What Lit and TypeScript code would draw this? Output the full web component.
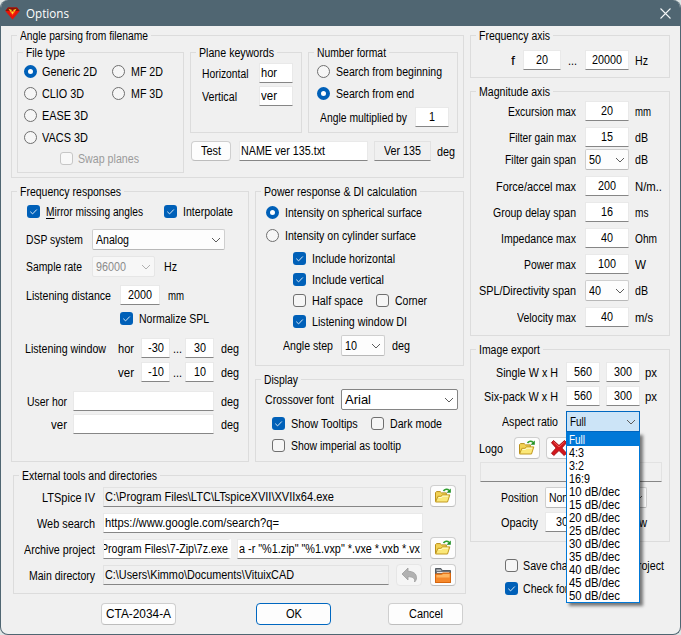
import { LitElement, html, css, nothing } from "lit";
import { customElement, property } from "lit/decorators.js";
import { classMap } from "lit/directives/class-map.js";

const pen = document.createElement("canvas").getContext("2d")!;

/** A single line of text condensed to a fixed advance width. */
@customElement("fit-text")
class FitText extends LitElement {
  @property() text = "";
  @property({ type: Number }) w = 0;
  @property({ type: Number }) size = 12;
  @property() face = "Liberation Sans";
  @property({ type: Number }) mark = 0;

  static styles = css`
    :host { display: block; height: 14px; flex: none; }
    .line { display: block; width: max-content; white-space: pre; transform-origin: 0 50%; }
    .mark { text-decoration: underline; text-underline-offset: 2px; }
  `;

  render() {
    pen.font = `${this.size}px "${this.face}"`;
    const k = this.w / pen.measureText(this.text).width;
    this.style.width = `${this.w}px`;
    return html`<span class="line"
      style="font: ${this.size}px/14px '${this.face}', sans-serif; transform: scaleX(${k})"
      ><span class="mark">${this.text.slice(0, this.mark)}</span>${this.text.slice(this.mark)}</span>`;
  }
}

const t = (text: string, w: number, cls = "", size = 12, mark = 0) =>
  html`<fit-text class="t ${cls}" .text=${text} .w=${w} .size=${size} .mark=${mark}></fit-text>`;

const field = (text = "", w = 0, cls = "") =>
  html`<div class="field ${cls}">${text ? t(text, w) : nothing}</div>`;

const chevron = html`<svg class="chev" width="10" height="6" viewBox="0 0 10 6"><path d="M1 1l4 4 4-4" /></svg>`;

const combo = (text: string, w: number, cls = "", size = 12) =>
  html`<div class="combo ${cls}">${t(text, w, "", size)}${chevron}</div>`;

const radio = (on: boolean) => html`<i class=${classMap({ radio: true, on })}></i>`;

const check = (on: boolean, cls = "") => html`<i class="check ${on ? "on" : ""} ${cls}">
  ${on ? html`<svg width="13" height="13" viewBox="0 0 13 13"><path d="M3.3 6.7l2.3 2.2 4.2-4.4" /></svg>` : nothing}
</i>`;

const openFolder = html`<svg width="18" height="16" viewBox="0 0 18 16">
  <path d="M1.5 13.5V4.6l1-1h3.7l1.3 1.3h4.8v2.2" fill="#f3d254" stroke="#b98f1d" />
  <path d="M1.6 14l2.3-5.7h3l1.5-1.4h7.4L13.500 14z" fill="#fbe878" stroke="#c29a22" />
  <path d="M4.600 9.500h3l1.300-1.300h5" fill="none" stroke="#fffad0" />
  <path d="M9.500 3c1.200-2 4-2.300 5.500-.6" fill="none" stroke="#2f9e2f" stroke-width="1.600" />
  <path d="M16.800 0.600v4.200h-4.300z" fill="#1f8f24" />
</svg>`;

const orangeFolder = html`<svg width="18" height="17" viewBox="0 0 18 17">
  <path d="M1.500 15.500V1.500h5.500l1.300 2h8.200v12z" fill="#6e7379" stroke="#555b61" />
  <path d="M2.500 2.500h4l1 1.500h-5z" fill="#b9bec4" />
  <path d="M3 5.500h12" stroke="#e9e9e9" />
  <path d="M1.500 7h6l1-1h8v9.500h-15z" fill="#f5882b" stroke="#d8660c" />
  <path d="M2.500 8h5.500l1-1h6.500v3.500h-13z" fill="#ffb560" />
</svg>`;

const undo = html`<svg width="17" height="16" viewBox="0 0 17 16">
  <path d="M7 1v3.300c5 0 8.500 2.200 8.500 6.500 0 1.800-.8 3.200-2 4.200.8-3.500-1.500-5.300-6.500-5.300v3.300L1 7z" fill="#b1b1b1" stroke="#9d9d9d" stroke-width=".8" />
</svg>`;

const redCross = html`<svg width="18" height="18" viewBox="0 0 18 18">
  <path d="M3.500 1.500L9 6.500l5.500-5 2 2.300L11.800 9l4.700 5.200-2.300 2.300L9 11.500l-5.200 5-2.300-2.300L6.200 9 1.500 3.800z" fill="#d3161c" stroke="#a50f14" />
  <path d="M3.500 2.800L9 8l5.500-5.200" fill="none" stroke="#ee5a56" />
</svg>`;

const gem = html`<svg class="gem" width="15" height="13" viewBox="0 0 15 13">
  <path d="M3 .5h9L14.700 4 7.500 12.500.3 4z" fill="#e81408" />
  <path d="M3 .5h9L14.700 4H.3z" fill="#8c1208" />
  <path d="M3.500 1.800l3.500 1.200-1.500 2zM11.500 1.800L8 3l1.500 2z" fill="#f4d020" />
  <path d="M4.500 5h6L7.500 9z" fill="#ff2a10" /><path d="M5.800 4.500h3.400L7.500 7.500z" fill="#ffe030" />
</svg>`;

const MAGNITUDE: [string, number, string, number, string, number, boolean][] = [
  ["Excursion max", 68, "20", 12, "mm", 16, false],
  ["Filter gain max", 67, "15", 12, "dB", 13, false],
  ["Filter gain span", 71, "50", 12, "dB", 13, true],
  ["Force/accel max", 80, "200", 18, "N/m..", 27, false],
  ["Group delay span", 83, "16", 12, "ms", 13.5, false],
  ["Impedance max", 75, "40", 12, "Ohm", 22, false],
  ["Power max", 52, "100", 18, "W", 11, false],
  ["SPL/Directivity span", 97, "40", 12, "dB", 13, true],
  ["Velocity max", 59, "40", 12, "m/s", 18, false],
];

const RATIOS: [string, number][] = [
  ["Full", 16], ["4:3", 15], ["3:2", 15], ["16:9", 21],
  ...[10, 15, 20, 25, 30, 35, 40, 45, 50].map((n): [string, number] => [`${n} dB/dec`, 51]),
];

@customElement("app-root")
class AppRoot extends LitElement {
  static styles = css`
    :host { display: block; width: 681px; height: 635px; background: #dfe5e4; color: #000; }
    * { box-sizing: border-box; }
    svg { display: block; }
    .window {
      height: 635px; border: 1px solid #506672; border-top: 0; border-radius: 8px;
      background: #f0f0f0; overflow: hidden;
    }
    .title { height: 26px; background: #506672; color: #fff; display: flex; align-items: center; padding: 0 9px 0 4px; }
    .title .cap { margin-left: 6px; margin-top: 1px; }
    .close { margin-left: auto; fill: none; stroke: #f4f6f7; stroke-width: 1.1; }
    .body { display: flex; gap: 6px; padding: 2px 0 0 10px; align-items: flex-start; }
    .left { width: 453px; display: flex; flex-direction: column; gap: 6px; }
    .right { width: 200px; display: flex; flex-direction: column; gap: 6px; }
    .pair { display: flex; gap: 6px; }
    .stack { display: flex; flex-direction: column; gap: 6px; }

    fieldset { margin: 0; padding: 0; border: 1px solid #dcdcdc; min-width: 0; }
    legend { height: 15px; margin: 0 0 0 5px; padding: 1px 3px 0; }
    .g-angle { height: 150px; }
    .g-file { width: 167px; height: 128px; }
    .g-plane { width: 112px; height: 88px; }
    .g-number { width: 150px; height: 88px; }
    .g-freq { width: 238px; height: 278px; }
    .g-power { width: 209px; height: 182px; }
    .g-display { width: 209px; height: 90px; }
    .g-tools { height: 126px; margin-left: 2px; width: 453px; }
    .g-axis { height: 50px; }
    .g-mag { height: 252px; }
    .g-image { height: 200px; }

    .angle { display: flex; gap: 6px; padding: 2px 0 0 5px; }
    .angle .side { display: flex; flex-direction: column; gap: 7px; }
    .rows { display: grid; }
    .row { display: grid; height: 22px; align-items: start; justify-items: start; }
    .row > .end { justify-self: end; }
    .row > .t, .label { margin-top: 5px; }

    .file { padding-left: 6px; grid-template-rows: 22px 22px 22px 21px 22px; }
    .file .row { grid-template-columns: 18px 70px 19px 1fr; }
    .file .swap { grid-template-columns: 18px 1fr; padding-left: 36px; }
    .plane { padding: 2px 0 0 11px; grid-template-rows: 23px 22px; }
    .plane .row { grid-template-columns: 57px 34px; }
    .number { padding-left: 8px; grid-template-rows: 22px 24px 22px; }
    .number .row { grid-template-columns: 19px 1fr; }
    .number .mult { grid-template-columns: 95px 34px; padding-left: 3px; }
    .test { grid-template-columns: 48px 135px 63px 1fr; padding-left: 1px; }

    .freq { padding: 1px 0 0 14px; grid-template-rows: 28px 27px 29px 23px 30px 24px 29px 23px 22px; }
    .freq .mirror { grid-template-columns: 19px 118px 19px 1fr; padding-left: 1px; }
    .freq .dsp { grid-template-columns: 66px 133px; }
    .freq .rate { grid-template-columns: 66px 72px 1fr; }
    .freq .dist { grid-template-columns: 94px 48px 1fr; }
    .freq .norm { grid-template-columns: 19px 1fr; padding-left: 94px; }
    .freq .win { grid-template-columns: 108px 7px 32px 12px 36px 1fr; }
    .freq .user { grid-template-columns: 41px 6px 148px 1fr; }

    .power { padding: 2px 0 0 10px; grid-template-rows: 23px 23px 21px 21px 21px 24px 22px; }
    .power .row { grid-template-columns: 19px 1fr; }
    .power .sub { padding-left: 27px; }
    .power .half { grid-template-columns: 19px 64px 19px 1fr; }
    .power .step { grid-template-columns: 58px 51px 1fr; padding-left: 17px; }

    .display { padding: 1px 0 0 9px; grid-template-rows: 24px 22px 22px; }
    .display .font { grid-template-columns: 76px 117px; }
    .display .tips { grid-template-columns: 19px 80px 19px 1fr; padding-left: 7px; }

    .tools { padding: 3px 0 0 8px; grid-template-rows: 26px 26px 26px 22px; }
    .tools .row { grid-template-columns: 73px 8px 327px 26px; }
    .tools .arch { grid-template-columns: 73px 8px 134px 193px 26px; }
    .tools .main { grid-template-columns: 73px 8px 293px 34px 26px; }

    .axis { padding: 6px 0 0 40px; }
    .axis .row { grid-template-columns: 12px 45px 17px 50px 1fr; }
    .mag { padding-top: 1px; grid-template-rows: 26px 22px 27px 26px 26px 26px 26px 27px 22px; }
    .mag .row { grid-template-columns: 105px 9px 50px 1fr; }

    .image { padding: 4px 0 0 8px; grid-template-rows: 24px 25px 27px 24px 25px 25px 22px; }
    .image .size { grid-template-columns: 79px 8px 40px 39px 1fr; }
    .image .ratio { grid-template-columns: 79px 8px 74px; }
    .image .logo { grid-template-columns: 35px 32px 1fr; }
    .image .pos { grid-template-columns: 59px 7px 1fr; }
    .image .opac { grid-template-columns: 59px 7px 92px 10px; }
    .image .path { padding-left: 1px; }

    .saves { padding: 6px 0 0 35px; grid-template-rows: 23px 22px; }
    .saves .row { grid-template-columns: 18px 1fr; }

    .field {
      height: 20px; margin-top: 1px; background: #fff; border: 1px solid #e9e9e9; border-bottom-color: #868686;
      display: flex; justify-content: center; padding-top: 2px; overflow: hidden;
    }
    .field.l { justify-content: flex-start; padding-left: 1px; }
    .field.r { justify-content: flex-end; border-right: 3px solid #fff; }
    .field.ro { background: #f0f0f0; border-top-color: #e2e2e2; border-left-color: #e2e2e2; border-right-color: #e2e2e2; }
    .w29 { width: 29px; } .w34 { width: 34px; } .w38 { width: 38px; } .w40 { width: 40px; }
    .w44 { width: 44px; } .w56 { width: 57px; } .w63 { width: 63px; } .w74 { width: 74px; }
    .w102 { width: 102px; } .w117 { width: 117px; } .w127 { width: 128px; } .w129 { width: 129px; }
    .w133 { width: 133px; } .w141 { width: 141px; } .w182 { width: 182px; } .w184 { width: 185px; }
    .w286 { width: 286px; } .w320 { width: 320px; }

    .combo {
      position: relative; height: 21px; margin-top: 1px; background: #fdfdfd; border: 1px solid #cfcfcf; border-bottom-color: #b8b8b8;
      border-radius: 2px; display: flex; align-items: flex-start; justify-content: space-between; padding: 3px 3px 0 3px;
    }
    .combo.off { background: #f7f7f7; border-color: #e6e6e6; color: #8b8b8b; }
    .combo.dark { border-color: #858585; background: #fff; }
    .combo.open { background: #cce4f7; border-color: #0067c0; border-radius: 0; }
    .chev { margin-top: 4px; fill: none; stroke: #5c5c5c; }
    .off .chev { stroke: #b0b0b0; }

    .radio, .check { display: block; width: 13px; height: 13px; margin-top: 5px; border: 1px solid #6f6f6f; background: #f6f6f6; }
    .radio { border-radius: 50%; }
    .radio.on { border: 4px solid #0060b8; background: #fff; }
    .check { border-radius: 3px; }
    .check.on { border: 0; background: #0060b8; }
    .check.on path { fill: none; stroke: #d8e8f6; }
    .check.off { border-color: #c6c6c6; background: #f8f8f8; }
    .gray { color: #9b9b9b; }

    .btn {
      height: 22px; background: #fdfdfd; border: 1px solid #cfcfcf; border-bottom-color: #bdbdbd; border-radius: 4px;
      display: flex; align-items: center; justify-content: center;
    }
    .btn.icon { width: 26px; margin-top: -1px; }
    .btn.icon.low { margin-top: 0; }
    .btn.dim { background: #f5f5f5; border-color: #e6e6e6; }
    .btn.testb { width: 40px; height: 20px; margin-top: 1px; }
    .btn.main { border-color: #0067c0; }
    .actions { display: grid; grid-template-columns: 155px 132px 75px; padding: 3px 0 0 90px; }
    .actions .btn { width: 75px; }

    .menu {
      position: absolute; left: -1px; top: 20px; width: 74px; z-index: 5; padding: 0; background: #fff;
      border: 1px solid #0078d7; box-shadow: 3px 3px 3px rgba(0, 0, 0, 0.5);
    }
    .item { height: 13px; padding-left: 2px; color: #000; }
    .item.sel { background: #0078d7; color: #fff; }
  `;

  angleGroup() {
    return html`<fieldset class="g-angle">
      <legend>${t("Angle parsing from filename", 128)}</legend>
      <div class="angle">
        <fieldset class="g-file">
          <legend>${t("File type", 39)}</legend>
          <div class="rows file">
            <div class="row">${radio(true)}${t("Generic 2D", 55)}${radio(false)}${t("MF 2D", 32)}</div>
            <div class="row">${radio(false)}${t("CLIO 3D", 42)}${radio(false)}${t("MF 3D", 32)}</div>
            <div class="row">${radio(false)}${t("EASE 3D", 46)}</div>
            <div class="row">${radio(false)}${t("VACS 3D", 46)}</div>
            <div class="row swap">${check(false, "off")}${t("Swap planes", 61, "gray")}</div>
          </div>
        </fieldset>
        <div class="side">
          <div class="pair">
            <fieldset class="g-plane">
              <legend>${t("Plane keywords", 75)}</legend>
              <div class="rows plane">
                <div class="row">${t("Horizontal", 46.5)}${field("hor", 16, "l w34")}</div>
                <div class="row">${t("Vertical", 35)}${field("ver", 16, "l w34")}</div>
              </div>
            </fieldset>
            <fieldset class="g-number">
              <legend>${t("Number format", 69)}</legend>
              <div class="rows number">
                <div class="row">${radio(false)}${t("Search from beginning", 106)}</div>
                <div class="row">${radio(true)}${t("Search from end", 78)}</div>
                <div class="row mult">${t("Angle multiplied by", 87)}${field("1", 6, "w34")}</div>
              </div>
            </fieldset>
          </div>
          <div class="row test">
            <div class="btn testb">${t("Test", 20)}</div>
            ${field("NAME ver 135.txt", 84, "l w129")}${field("Ver 135", 37, "ro w56")}${t("deg", 18)}
          </div>
        </div>
      </div>
    </fieldset>`;
  }

  freqGroup() {
    return html`<fieldset class="g-freq">
      <legend>${t("Frequency responses", 101)}</legend>
      <div class="rows freq">
        <div class="row mirror">${check(true)}${t("Mirror missing angles", 97, "", 12, 1)}${check(true)}${t("Interpolate", 50)}</div>
        <div class="row dsp">${t("DSP system", 57)}${combo("Analog", 33, "w133")}</div>
        <div class="row rate">${t("Sample rate", 56)}${combo("96000", 30, "off w63")}${t("Hz", 13)}</div>
        <div class="row dist">${t("Listening distance", 85)}${field("2000", 24, "w40")}${t("mm", 16)}</div>
        <div class="row norm">${check(true)}${t("Normalize SPL", 70)}</div>
        <div class="row win">
          <div class="pair end">${t("Listening window", 81, "label")}<span></span>${t("hor", 16, "label")}</div><span></span>
          ${field("-30", 16, "w29")}${t("...", 9)}${field("30", 12, "w29")}${t("deg", 18)}
        </div>
        <div class="row win">${t("ver", 16, "end")}<span></span>
          ${field("-10", 16, "w29")}${t("...", 9)}${field("10", 12, "w29")}${t("deg", 18)}
        </div>
        <div class="row user">${t("User hor", 40, "end")}<span></span>${field("", 0, "w141")}${t("deg", 18)}</div>
        <div class="row user">${t("ver", 16, "end")}<span></span>${field("", 0, "w141")}${t("deg", 18)}</div>
      </div>
    </fieldset>`;
  }

  powerGroup() {
    return html`<fieldset class="g-power">
      <legend>${t("Power response & DI calculation", 153)}</legend>
      <div class="rows power">
        <div class="row">${radio(true)}${t("Intensity on spherical surface", 137)}</div>
        <div class="row">${radio(false)}${t("Intensity on cylinder surface", 131)}</div>
        <div class="row sub">${check(true)}${t("Include horizontal", 83)}</div>
        <div class="row sub">${check(true)}${t("Include vertical", 72)}</div>
        <div class="row sub half">${check(false)}${t("Half space", 51)}${check(false)}${t("Corner", 32)}</div>
        <div class="row sub">${check(true)}${t("Listening window DI", 95)}</div>
        <div class="row step">${t("Angle step", 50)}${combo("10", 12, "w44")}${t("deg", 18)}</div>
      </div>
    </fieldset>`;
  }

  displayGroup() {
    return html`<fieldset class="g-display">
      <legend>${t("Display", 34)}</legend>
      <div class="rows display">
        <div class="row font">${t("Crossover font", 69)}${combo("Arial", 26, "dark w117", 13)}</div>
        <div class="row tips">${check(true)}${t("Show Tooltips", 67)}${check(false)}${t("Dark mode", 52)}</div>
        <div class="row tips">${check(false)}${t("Show imperial as tooltip", 110)}</div>
      </div>
    </fieldset>`;
  }

  toolsGroup() {
    return html`<fieldset class="g-tools">
      <legend>${t("External tools and directories", 135)}</legend>
      <div class="rows tools">
        <div class="row">${t("LTSpice IV", 53, "end")}<span></span>
          ${field("C:\\Program Files\\LTC\\LTspiceXVII\\XVIIx64.exe", 229, "l ro w320")}<div class="btn icon">${openFolder}</div></div>
        <div class="row">${t("Web search", 58, "end")}<span></span>
          ${field("https://www.google.com/search?q=", 174, "l w320")}</div>
        <div class="row arch">${t("Archive project", 71, "end")}<span></span>
          ${field("Program Files\\7-Zip\\7z.exe", 127, "r w127")}
          ${field('a -r "%1.zip" "%1.vxp" *.vxe *.vxb *.vx', 181, "l w184")}<div class="btn icon">${openFolder}</div></div>
        <div class="row main">${t("Main directory", 66, "end")}<span></span>
          ${field("C:\\Users\\Kimmo\\Documents\\VituixCAD", 189, "l ro w286")}
          <div class="btn icon low dim">${undo}</div><div class="btn icon low">${orangeFolder}</div></div>
      </div>
    </fieldset>`;
  }

  axisGroup() {
    return html`<fieldset class="g-axis">
      <legend>${t("Frequency axis", 71)}</legend>
      <div class="rows axis">
        <div class="row">${t("f", 4)}${field("20", 12, "w38")}${t("...", 9)}${field("20000", 30, "w44")}${t("Hz", 13)}</div>
      </div>
    </fieldset>`;
  }

  magGroup() {
    return html`<fieldset class="g-mag">
      <legend>${t("Magnitude axis", 71)}</legend>
      <div class="rows mag">
        ${MAGNITUDE.map(([name, nw, value, vw, unit, uw, list]) => html`<div class="row">
          ${t(name, nw, "end")}<span></span>${list ? combo(value, vw, "w44") : field(value, vw, "w44")}${t(unit, uw)}
        </div>`)}
      </div>
    </fieldset>`;
  }

  imageGroup() {
    const size = (name: string, w: number) => html`<div class="row size">${t(name, w, "end")}<span></span>
      ${field("560", 18, "w34")}${field("300", 18, "w34")}${t("px", 12)}</div>`;
    return html`<fieldset class="g-image">
      <legend>${t("Image export", 61)}</legend>
      <div class="rows image">
        ${size("Single W x H", 62)}${size("Six-pack W x H", 74)}
        <div class="row ratio">${t("Aspect ratio", 56, "end")}<span></span>
          <div class="combo open w74">${t("Full", 16)}${chevron}
            <div class="menu">${RATIOS.map(([label, w], i) =>
              html`<div class=${classMap({ item: true, sel: i === 0 })}>${t(label, w)}</div>`)}</div>
          </div>
        </div>
        <div class="row logo">${t("Logo", 24)}<div class="btn icon low">${openFolder}</div><div class="btn icon low">${redCross}</div></div>
        <div class="row path">${field("", 0, "ro w182")}</div>
        <div class="row pos">${t("Position", 37, "end")}<span></span>${combo("None", 25, "w102")}</div>
        <div class="row opac">${t("Opacity", 37, "end")}<span></span>${field("30", 12, "w34")}${t("w", 8, "end")}</div>
      </div>
    </fieldset>`;
  }

  render() {
    return html`<div class="window">
      <div class="title">${gem}
        <fit-text class="cap" .text=${"Options"} .w=${43} .size=${12} .face=${"Open Sans"}></fit-text>
        <svg class="close" width="11" height="11" viewBox="0 0 11 11"><path d="M.5.5l10 10M10.500.5l-10 10" /></svg>
      </div>
      <div class="body">
        <div class="left">
          ${this.angleGroup()}
          <div class="pair">${this.freqGroup()}<div class="stack">${this.powerGroup()}${this.displayGroup()}</div></div>
          ${this.toolsGroup()}
          <div class="actions">
            <div class="btn">${t("CTA-2034-A", 65)}</div>
            <div class="btn main">${t("OK", 16)}</div>
            <div class="btn">${t("Cancel", 34)}</div>
          </div>
        </div>
        <div class="right">
          ${this.axisGroup()}${this.magGroup()}${this.imageGroup()}
          <div class="rows saves">
            <div class="row">${check(false)}${t("Save changes into the project", 141)}</div>
            <div class="row">${check(true)}${t("Check for updates", 86)}</div>
          </div>
        </div>
      </div>
    </div>`;
  }
}
